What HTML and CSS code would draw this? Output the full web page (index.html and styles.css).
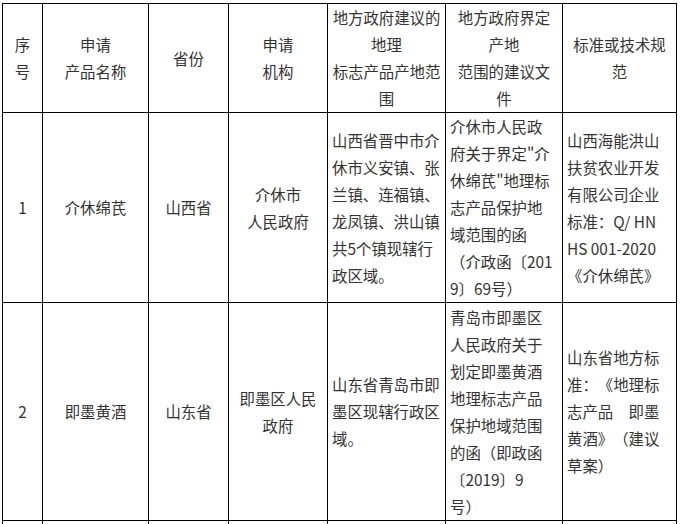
FILE: index.html
```html
<!DOCTYPE html>
<html lang="zh-CN">
<head>
<meta charset="utf-8">
<title>地理标志产品</title>
<link rel="stylesheet" href="styles.css">
</head>
<body>
<div class="wrap">
<table class="gi-table">
  <colgroup>
    <col class="c-no">
    <col class="c-name">
    <col class="c-prov">
    <col class="c-org">
    <col class="c-range">
    <col class="c-doc">
    <col class="c-std">
  </colgroup>
  <tbody>
    <tr class="head">
      <td class="center">序<br>号</td>
      <td class="center">申请<br>产品名称</td>
      <td class="center">省份</td>
      <td class="center">申请<br>机构</td>
      <td class="center">地方政府建议的<br>地理<br>标志产品产地范<br>围</td>
      <td class="center">地方政府界定<br>产地<br>范围的建议文<br>件</td>
      <td class="center">标准或技术规<br>范</td>
    </tr>
    <tr>
      <td class="center">1</td>
      <td class="center">介休绵芪</td>
      <td class="center">山西省</td>
      <td class="center">介休市<br>人民政府</td>
      <td>山西省晋中市介<br>休市义安镇、张<br>兰镇、连福镇、<br>龙凤镇、洪山镇<br>共5个镇现辖行<br>政区域。</td>
      <td>介休市人民政<br>府关于界定"介<br>休绵芪"地理标<br>志产品保护地<br>域范围的函<br>（介政函〔201<br>9〕69号）</td>
      <td>山西海能洪山<br>扶贫农业开发<br>有限公司企业<br>标准：Q/ HN<br>HS 001-2020<br>《介休绵芪》</td>
    </tr>
    <tr class="row-tall">
      <td class="center">2</td>
      <td class="center">即墨黄酒</td>
      <td class="center">山东省</td>
      <td class="center">即墨区人民<br>政府</td>
      <td>山东省青岛市即<br>墨区现辖行政区<br>域。</td>
      <td>青岛市即墨区<br>人民政府关于<br>划定即墨黄酒<br>地理标志产品<br>保护地域范围<br>的函（即政函<br>〔2019〕9<br>号）</td>
      <td>山东省地方标<br>准：《地理标<br>志产品　即墨<br>黄酒》（建议<br>草案）</td>
    </tr>
    <tr class="row-next">
      <td></td>
      <td></td>
      <td></td>
      <td></td>
      <td></td>
      <td></td>
      <td></td>
    </tr>
  </tbody>
</table>
</div>
</body>
</html>
```

FILE: styles.css
```css
html, body {
  margin: 0;
  padding: 0;
  background: #ffffff;
}

.wrap {
  padding: 3px 0 0 2px;
}

.gi-table {
  border-collapse: collapse;
  table-layout: fixed;
  width: 674px;
  font-family: "Noto Sans CJK SC", "Noto Sans", sans-serif;
  font-size: 15.4px;
  line-height: 27px;
  color: #333333;
  text-spacing-trim: space-all;
}

.c-no { width: 40px; }
.c-name { width: 106px; }
.c-prov { width: 80px; }
.c-org { width: 99px; }
.c-range { width: 118px; }
.c-doc { width: 117px; }
.c-std { width: 114px; }

.gi-table td {
  border: 1px solid #000000;
  padding: 0 4px;
  vertical-align: middle;
  text-align: left;
  white-space: nowrap;
  overflow: hidden;
}

.gi-table td.center {
  text-align: center;
}

.gi-table .row-tall td {
  height: 217px;
}

.gi-table .row-next td {
  height: 60px;
}
```
